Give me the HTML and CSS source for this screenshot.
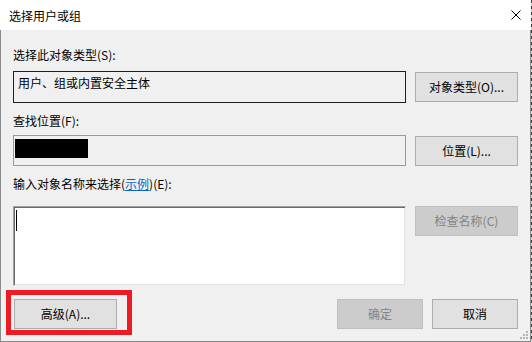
FILE: index.html
```html
<!DOCTYPE html>
<html lang="zh-CN">
<head>
<meta charset="utf-8">
<title>选择用户或组</title>
<link rel="stylesheet" href="styles.css">
</head>
<body>
<div class="screen">
  <div class="window">
    <div class="titlebar">
      <span class="title">选择用户或组</span>
      <svg class="close" width="10" height="10" viewBox="0 0 10 10" aria-hidden="true">
        <path d="M0.5 0.5 L9.5 9.5 M9.5 0.5 L0.5 9.5" stroke="#000" stroke-width="1" fill="none"/>
      </svg>
    </div>
    <div class="body">
      <div class="label label-first">选择此对象类型(S):</div>
      <div class="row row-obj">
        <div class="field field-dark">用户、组或内置安全主体</div>
        <button class="btn">对象类型(O)...</button>
      </div>

      <div class="label">查找位置(F):</div>
      <div class="row row-loc">
        <div class="field field-gray"><span class="redacted"></span></div>
        <button class="btn">位置(L)...</button>
      </div>

      <div class="label label-names">输入对象名称来选择(<a class="link" href="#">示例</a>)(E):</div>
      <div class="row row-names">
        <div class="textarea"><span class="caret"></span></div>
        <button class="btn btn-disabled">检查名称(C)</button>
      </div>

      <div class="footer">
        <button class="btn btn-adv">高级(A)...</button>
        <div class="spacer"></div>
        <button class="btn btn-small btn-disabled">确定</button>
        <button class="btn btn-small">取消</button>
      </div>
      <div class="highlight"></div>
      <svg class="grip" width="9" height="9" viewBox="0 0 9 9" aria-hidden="true">
        <rect x="6" y="0" width="2" height="2" fill="#b5b5b5"/>
        <rect x="3" y="3" width="2" height="2" fill="#b5b5b5"/>
        <rect x="6" y="3" width="2" height="2" fill="#b5b5b5"/>
        <rect x="0" y="6" width="2" height="2" fill="#b5b5b5"/>
        <rect x="3" y="6" width="2" height="2" fill="#b5b5b5"/>
        <rect x="6" y="6" width="2" height="2" fill="#b5b5b5"/>
      </svg>
    </div>
  </div>
  <div class="edge"></div>
</div>
</body>
</html>
```
FILE: styles.css
```css
* { box-sizing: border-box; }
html, body { margin: 0; padding: 0; }
body {
  width: 532px;
  height: 342px;
  overflow: hidden;
  background: #f0f0f0;
  font-family: "Noto Sans CJK SC", "Noto Sans", sans-serif;
  font-size: 12px;
  color: #000;
}
.screen {
  display: flex;
  width: 532px;
  height: 342px;
}
.window {
  width: 531px;
  height: 342px;
  display: flex;
  flex-direction: column;
}
.edge {
  width: 1px;
  height: 342px;
  background: repeating-linear-gradient(to bottom, #3a3a3a 0 3px, #d8d8d8 3px 6px);
}
.titlebar {
  height: 30px;
  background: #fff;
  display: flex;
  align-items: center;
  padding-left: 9px;
  padding-right: 10px;
}
.title {
  flex: 1;
  line-height: 14px;
  margin-top: 1px;
}
.close { display: block; }

.body {
  position: relative;
  flex: 1;
  border-left: 1px solid #8a8a8a;
  border-right: 1px solid #8a8a8a;
  border-bottom: 1px solid #8a8a8a;
  padding: 0 12px;
  display: flex;
  flex-direction: column;
}
.label {
  height: 14px;
  line-height: 14px;
  margin-top: 11px;
  white-space: nowrap;
}
.label-first { margin-top: 18px; }
.link { color: #0066cc; text-decoration: underline; }

.row {
  display: grid;
  grid-template-columns: 1fr 103px;
  column-gap: 9px;
  align-items: center;
}
.row-obj { margin-top: 9px; }
.row-loc { margin-top: 7px; }
.row-names { margin-top: 15px; align-items: start; }

.field {
  height: 32px;
  line-height: 14px;
  padding: 4px 4px 0;
  white-space: nowrap;
}
.field-dark { border: 1px solid #1e1e1e; }
.field-gray {
  height: 31px;
  border: 1px solid #9a9a9a;
  padding: 3px 1px 0;
}
.redacted {
  display: block;
  width: 73px;
  height: 19px;
  background: #000;
}
.textarea {
  height: 80px;
  background: #fff;
  border: 1px solid;
  border-color: #a0a0a0 #f0f0f0 #f0f0f0 #a0a0a0;
  box-shadow: inset 1px 1px 0 #696969, inset -1px -1px 0 #e3e3e3;
  padding: 3px 0 0 2px;
}
.caret {
  display: block;
  width: 1px;
  height: 21px;
  background: #000;
}

.btn {
  font-family: inherit;
  font-size: 12px;
  color: #000;
  height: 30px;
  width: 103px;
  padding: 0;
  margin: 0;
  background: #e1e1e1;
  border: 1px solid #adadad;
  line-height: 14px;
  white-space: nowrap;
}
.btn-disabled {
  background: #cccccc;
  border-color: #bfbfbf;
  color: #838383;
}
.btn-small { width: 86px; }

.footer {
  display: flex;
  align-items: center;
  column-gap: 9px;
  margin-top: 13px;
}
.btn-adv { margin-left: 1px; }
.spacer { flex: 1; }

.highlight {
  position: absolute;
  left: 5px;
  top: 260px;
  width: 126px;
  height: 45px;
  border: 5px solid #ed1c24;
  pointer-events: none;
}
.grip {
  position: absolute;
  right: 1px;
  bottom: 1px;
}
```
